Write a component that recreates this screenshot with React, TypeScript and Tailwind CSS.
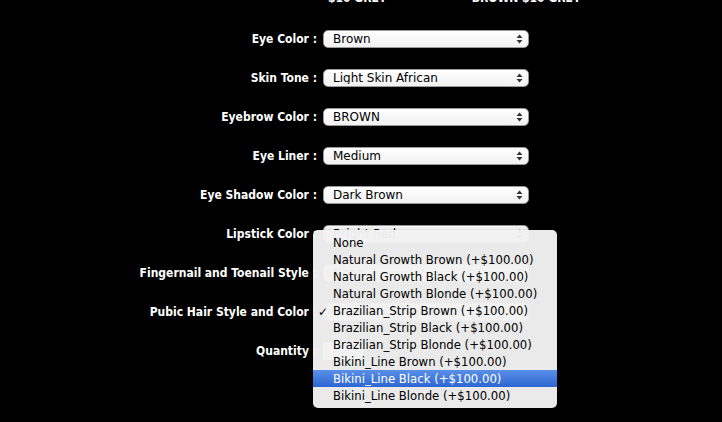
import React from "react";

type Row = {
  label: string;
  value: string;
};

const rows: Row[] = [
  { label: "Eye Color :", value: "Brown" },
  { label: "Skin Tone :", value: "Light Skin African" },
  { label: "Eyebrow Color :", value: "BROWN" },
  { label: "Eye Liner :", value: "Medium" },
  { label: "Eye Shadow Color :", value: "Dark Brown" },
  { label: "Lipstick Color :", value: "Bright Red" },
  { label: "Fingernail and Toenail Style :", value: "None" },
  { label: "Pubic Hair Style and Color :", value: "Brazilian_Strip Brown" },
];

const options = [
  "None",
  "Natural Growth Brown (+$100.00)",
  "Natural Growth Black (+$100.00)",
  "Natural Growth Blonde (+$100.00)",
  "Brazilian_Strip Brown (+$100.00)",
  "Brazilian_Strip Black (+$100.00)",
  "Brazilian_Strip Blonde (+$100.00)",
  "Bikini_Line Brown (+$100.00)",
  "Bikini_Line Black (+$100.00)",
  "Bikini_Line Blonde (+$100.00)",
];

const checked = 4;
const hovered = 8;

const labelFont = { fontFamily: '"DejaVu Sans Condensed", "DejaVu Sans", sans-serif' };

function Arrows() {
  return (
    <svg width="7" height="10" viewBox="0 0 7 10" className="shrink-0">
      <path d="M3.5 0.5 L6.5 4 L0.5 4 Z" fill="#333" />
      <path d="M3.5 9.5 L6.5 6 L0.5 6 Z" fill="#333" />
    </svg>
  );
}

function FakeSelect({ value }: { value: string }) {
  return (
    <div className="flex h-[18px] w-[206px] items-center justify-between rounded-[5px] border border-[#9a9a9a] bg-gradient-to-b from-white to-[#f1f1f1] pl-[9px] pr-[5px] text-[12px] leading-none text-black">
      <span className="truncate">{value}</span>
      <Arrows />
    </div>
  );
}

function PopupMenu() {
  return (
    <div className="absolute left-[313px] top-[230px] w-[244px] rounded-[5px] bg-[#f2f2f2]/[0.97] py-[4px] shadow-[0_3px_10px_rgba(0,0,0,0.45)] text-[11.7px] text-black">
      {options.map((opt, i) => (
        <div
          key={opt}
          className={
            i === hovered
              ? "flex h-[17px] items-center pt-[2px] bg-gradient-to-b from-[#5a8fe8] to-[#2e66d3] text-white"
              : "flex h-[17px] items-center pt-[2px]"
          }
        >
          <span className="w-[20px] pl-[5px] text-[12px]">{i === checked ? "✓" : ""}</span>
          <span>{opt}</span>
        </div>
      ))}
    </div>
  );
}

export default function App() {
  return (
    <div
      className="relative h-[422px] w-full overflow-hidden bg-black text-white"
      style={{ fontFamily: '"Lucida Grande", "DejaVu Sans", sans-serif' }}
    >
      <div className="flex h-[30px] flex-col">
        <div className="-mt-[9px] flex text-[12px] font-bold leading-[15px]" style={labelFont}>
          <span className="ml-[328px]">$10 GREY</span>
          <span className="ml-[85px]">BROWN $10 GREY</span>
        </div>
      </div>
      <div className="flex flex-col gap-[21px]">
        {rows.map((r) => (
          <div key={r.label} className="grid h-[18px] grid-cols-[317px_206px] items-center gap-x-[6px]">
            <span className="text-right text-[12px] font-bold leading-none" style={labelFont}>
              {r.label}
            </span>
            <FakeSelect value={r.value} />
          </div>
        ))}
        <div className="grid h-[18px] grid-cols-[317px_206px] items-center gap-x-[6px]">
          <span className="text-right text-[12px] font-bold leading-none" style={labelFont}>
            Quantity :
          </span>
          <div className="h-[18px] w-[40px] bg-white" />
        </div>
      </div>
      <PopupMenu />
    </div>
  );
}
